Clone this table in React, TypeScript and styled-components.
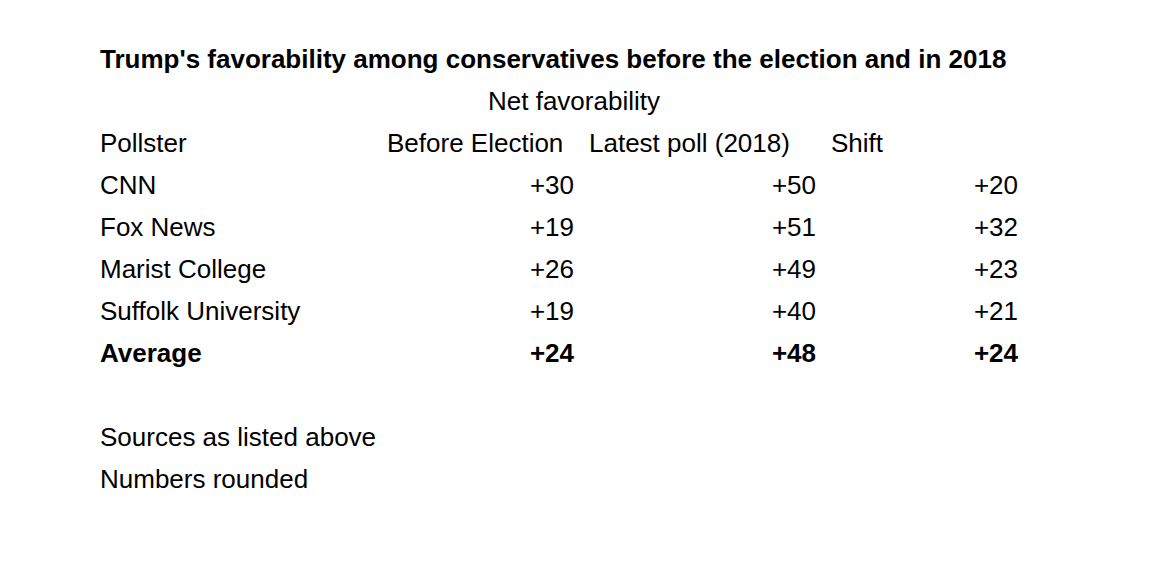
import styled, { createGlobalStyle } from 'styled-components';

const rows = [
  { name: 'CNN', before: '+30', latest: '+50', shift: '+20' },
  { name: 'Fox News', before: '+19', latest: '+51', shift: '+32' },
  { name: 'Marist College', before: '+26', latest: '+49', shift: '+23' },
  { name: 'Suffolk University', before: '+19', latest: '+40', shift: '+21' },
];

export default function App() {
  return (
    <>
      <GlobalStyle />
      <Sheet>
        <Title>Trump's favorability among conservatives before the election and in 2018</Title>
        <Subhead>Net favorability</Subhead>

        <Cell>Pollster</Cell>
        <Cell>Before Election</Cell>
        <Cell>Latest poll (2018)</Cell>
        <Cell>Shift</Cell>

        {rows.map(r => (
          <Row key={r.name}>
            <Cell>{r.name}</Cell>
            <Num>{r.before}</Num>
            <Num>{r.latest}</Num>
            <Num>{r.shift}</Num>
          </Row>
        ))}

        <Cell $bold>Average</Cell>
        <Num $bold>+24</Num>
        <Num $bold>+48</Num>
        <Num $bold>+24</Num>

        <Blank />
        <Note>Sources as listed above</Note>
        <Note>Numbers rounded</Note>
      </Sheet>
    </>
  );
}

const GlobalStyle = createGlobalStyle`
  html, body {
    margin: 0;
    padding: 0;
    background: #ffffff;
  }
  body {
    font-family: "Liberation Sans", Arial, sans-serif;
    color: #000000;
  }
`;

const Sheet = styled.div`
  display: grid;
  grid-template-columns: 287px 202px 242px 202px;
  grid-auto-rows: 42px;
  align-items: center;
  padding: 38px 0 0 97px;
  font-size: 26px;
  line-height: 42px;
`;

const Row = styled.div`
  display: contents;
`;

const Cell = styled.div<{ $bold?: boolean }>`
  padding-left: 3px;
  white-space: nowrap;
  font-weight: ${({ $bold }) => ($bold ? 700 : 400)};
`;

const Num = styled(Cell)`
  padding-left: 0;
  padding-right: 12px;
  text-align: right;
`;

const Title = styled(Cell)`
  grid-column: 1 / -1;
  font-weight: 700;
`;

const Subhead = styled(Cell)`
  grid-column: 2 / -1;
  padding-left: 104px;
`;

const Blank = styled.div`
  grid-column: 1 / -1;
`;

const Note = styled(Cell)`
  grid-column: 1 / -1;
`;
